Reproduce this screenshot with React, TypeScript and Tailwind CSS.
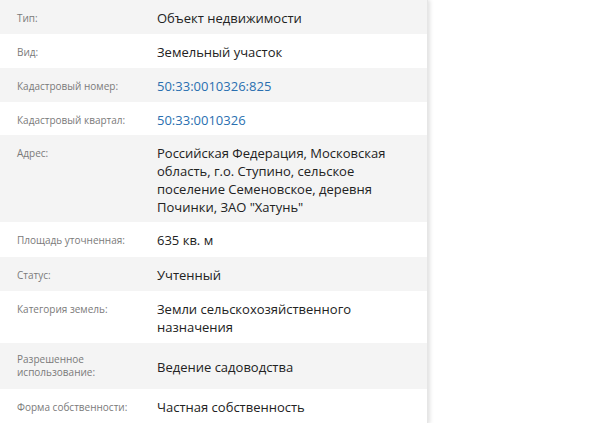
const rows: { l: string[]; v: string[]; h: number; link?: boolean }[] = [
  { l: ["Тип:"], v: ["Объект недвижимости"], h: 34 },
  { l: ["Вид:"], v: ["Земельный участок"], h: 34 },
  { l: ["Кадастровый номер:"], v: ["50:33:0010326:825"], h: 34, link: true },
  { l: ["Кадастровый квартал:"], v: ["50:33:0010326"], h: 33, link: true },
  { l: ["Адрес:"], v: ["Российская Федерация, Московская", "область, г.о. Ступино, сельское", "поселение Семеновское, деревня", "Починки, ЗАО \"Хатунь\""], h: 87 },
  { l: ["Площадь уточненная:"], v: ["635 кв. м"], h: 35 },
  { l: ["Статус:"], v: ["Учтенный"], h: 34 },
  { l: ["Категория земель:"], v: ["Земли сельскохозяйственного", "назначения"], h: 52 },
  { l: ["Разрешенное", "использование:"], v: ["Ведение садоводства"], h: 46 },
  { l: ["Форма собственности:"], v: ["Частная собственность"], h: 35 },
];

export default function App() {
  return (
    <div className="w-[600px] h-[423px] bg-white overflow-hidden" style={{ fontFamily: '"Open Sans", "Noto Sans", sans-serif' }}>
      <div className="w-[428px] shadow-[2px_0_4px_rgba(0,0,0,0.12)] border-r border-[#e6e6e6]">
        {rows.map((r, i) => {
          const multiL = r.l.length > 1;
          return (
            <div key={i} style={{ height: r.h }} className={`flex pl-[17px] overflow-hidden ${i % 2 === 0 ? "bg-[#f4f4f4]" : "bg-white"} ${multiL ? "items-center" : "pt-[8px]"}`}>
              <div className={`w-[140px] text-[10px] text-[#7a7a7a] ${multiL ? "leading-[13px]" : "leading-[19px] pt-[1px]"}`}>
                {r.l.map((t, j) => <div key={j}>{t}</div>)}
              </div>
              <div className={`text-[13px] leading-[18px] ${r.link ? "text-[#2a6fb0]" : "text-[#222]"} pt-[1px]`}>
                {r.v.map((t, j) => <div key={j}>{t}</div>)}
              </div>
            </div>
          );
        })}
      </div>
    </div>
  );
}
